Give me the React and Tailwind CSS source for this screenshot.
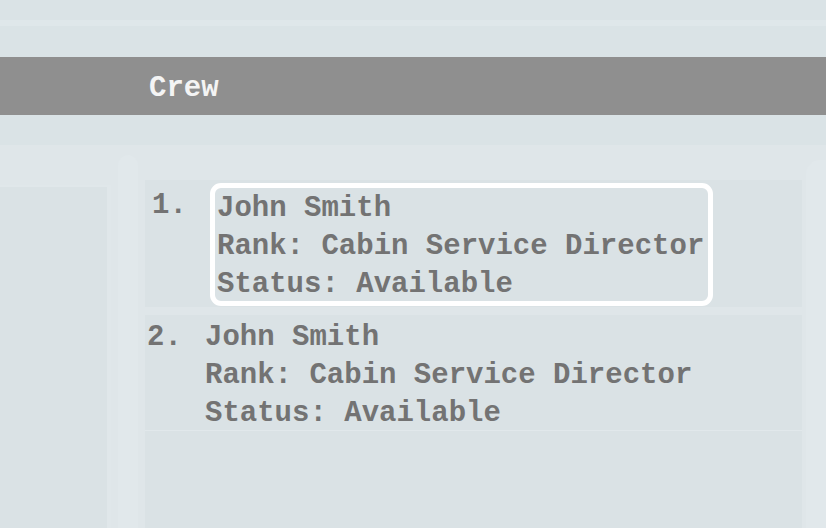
import React from 'react';

const crew = [
  { id: 1, name: 'John Smith', rank: 'Cabin Service Director', status: 'Available' },
  { id: 2, name: 'John Smith', rank: 'Cabin Service Director', status: 'Available' },
];

const mono = { fontFamily: '"Liberation Mono", "DejaVu Sans Mono", monospace' };

function CrewRow({ item, index, selected }) {
  if (selected) {
    return (
      <div className="flex bg-[#dae2e5] h-[127px] pt-[3px]">
        <div className="w-[65px] pl-[7px] pt-[4px] leading-[38px]">{index}.</div>
        <div className="w-[503px] h-[123px] border-[5px] border-white rounded-[11px] pl-[2px] pt-[2px] leading-[38px]">
          <div>{item.name}</div>
          <div>Rank: {item.rank}</div>
          <div>Status: {item.status}</div>
        </div>
      </div>
    );
  }
  return (
    <div className="flex bg-[#dae2e5] h-[116px] pt-[4px] border-b border-[#e1e8eb]">
      <div className="w-[60px] pl-[2px] leading-[38px]">{index}.</div>
      <div className="leading-[38px]">
        <div>{item.name}</div>
        <div>Rank: {item.rank}</div>
        <div>Status: {item.status}</div>
      </div>
    </div>
  );
}

export default function App() {
  return (
    <div className="w-[826px] h-[528px] overflow-hidden bg-[#dae3e6] flex flex-col" style={mono}>
      <div className="h-[20px] shrink-0" />
      <div className="h-[6px] shrink-0 bg-[#dfe7ea]" />
      <div className="h-[31px] shrink-0" />
      <div className="h-[58px] shrink-0 bg-[#8f8f8f] flex items-center pl-[149px] pt-[5px]">
        <span className="text-[29px] font-bold text-[#f4f4f4]">Crew</span>
      </div>
      <div className="h-[30px] shrink-0" />
      <div className="flex-1 flex bg-[#dfe6e9]">
        <div className="w-[111px] mt-[40px] bg-[#dae2e5] border-t-2 border-r-4 border-[#e0e7ea]" />
        <div className="w-[34px] flex justify-center pt-[10px]">
          <div className="w-[20px] h-full bg-[#e1e8eb] rounded-t-[14px]" />
        </div>
        <div className="w-[657px] mt-[35px] flex flex-col text-[29px] font-bold text-[#737373]">
          <CrewRow item={crew[0]} index={1} selected />
          <div className="h-[8px] bg-[#dfe6e9]" />
          <CrewRow item={crew[1]} index={2} />
          <div className="flex-1 bg-[#dae2e5]" />
        </div>
        <div className="flex-1 pt-[15px] pl-[4px]">
          <div className="h-full bg-[#e1e8eb] rounded-tl-[14px]" />
        </div>
      </div>
    </div>
  );
}
